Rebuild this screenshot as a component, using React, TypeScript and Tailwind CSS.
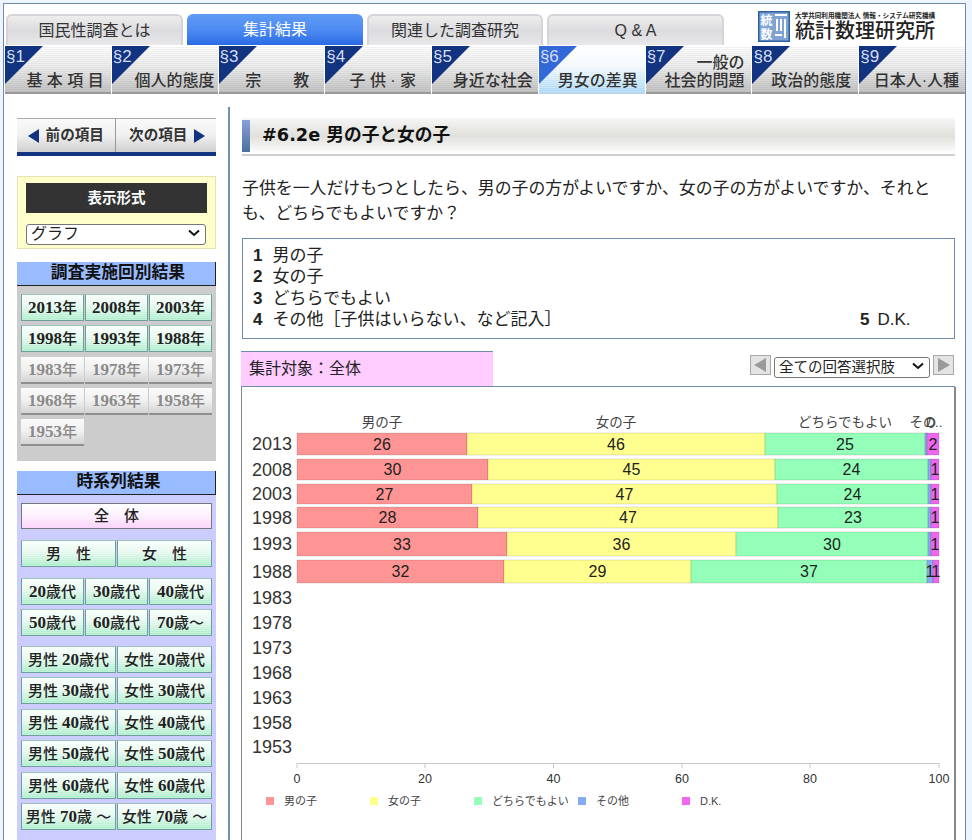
import React from "react";

const topTabs = [
  { label: "国民性調査とは", width: "w-[177px]", active: false },
  { label: "集計結果", width: "w-[176px]", active: true },
  { label: "関連した調査研究", width: "w-[176px]", active: false },
  { label: "Q & A", width: "w-[177px]", active: false },
];

const sections = [
  { no: "§1", lines: ["基 本 項 目"], pr: "pr-[7px]" },
  { no: "§2", lines: ["個人的態度"], pr: "pr-[3px]" },
  { no: "§3", lines: ["宗　　教"], pr: "pr-[15px]" },
  { no: "§4", lines: ["子 供 · 家"], pr: "pr-[15px]" },
  { no: "§5", lines: ["身近な社会"], pr: "pr-[5px]" },
  { no: "§6", lines: ["男女の差異"], pr: "pr-[7px]" },
  { no: "§7", lines: ["一般の", "社会的問題"], pr: "pr-[7px]" },
  { no: "§8", lines: ["政治的態度"], pr: "pr-[7px]" },
  { no: "§9", lines: ["日本人·人種"], pr: "pr-[6px]" },
];

const yearsOn = ["2013", "2008", "2003", "1998", "1993", "1988"];
const yearsOff = ["1983", "1978", "1973", "1968", "1963", "1958", "1953"];

const green =
  "bg-[image:repeating-linear-gradient(0deg,rgba(255,255,255,0.3)_0px,rgba(255,255,255,0.3)_1px,transparent_1px,transparent_2px),linear-gradient(#f8fffb,#e4f8ee_45%,#a6ecc8)] border border-[#6f9f9a] border-t-[#9cc4bc] text-[#222]";
const grey =
  "bg-linear-to-b from-[#fbfbfb] via-[#f0f0f0] to-[#d4d4d4] border-b-2 border-b-[#8f8f8f] text-[#8a8a8a]";

// digits of the button labels are set in a bold serif
function BtnLabel({ text }: { text: string }) {
  return (
    <span>
      {text.split(/(\d+)/).map((part, i) =>
        /\d/.test(part) ? (
          <span key={i} className="font-['Liberation_Serif','Noto_Sans_CJK_JP',serif] font-bold text-[17px]">
            {part}
          </span>
        ) : (
          <span key={i}>{part}</span>
        )
      )}
    </span>
  );
}

function SideBtn({ text, off }: { text: string; off?: boolean }) {
  return (
    <div className={`h-[27px] flex items-center justify-center font-medium text-[15px] leading-none whitespace-nowrap ${off ? grey : green}`}>
      <BtnLabel text={text} />
    </div>
  );
}

function Logo() {
  return (
    <svg width="32" height="31" viewBox="0 0 32 31" className="shrink-0">
      <rect width="32" height="31" fill="#2f5f9f" />
      <rect x="1.5" y="1.5" width="29" height="28" fill="#7fa4d4" />
      <text x="2.5" y="14" fontSize="12" fontWeight="700" fill="#fff" fontFamily="Noto Sans CJK JP">統</text>
      <text x="2.5" y="27.5" fontSize="12" fontWeight="700" fill="#fff" fontFamily="Noto Sans CJK JP">数</text>
      <rect x="17" y="3" width="12" height="2" fill="#fff" />
      <rect x="18" y="8" width="2" height="12" fill="#fff" />
      <rect x="22" y="8" width="2" height="12" fill="#fff" />
      <rect x="26" y="8" width="2" height="19" fill="#fff" />
      <rect x="17" y="23" width="7" height="2" fill="#fff" />
    </svg>
  );
}

function Select({ label, width, text }: { label: string; width: string; text: string }) {
  return (
    <div className={`relative h-[21px] ${width}`}>
      <select className={`appearance-none w-full h-full bg-white border border-[#767676] rounded-[3px] leading-none pl-[4px] ${text}`}>
        <option>{label}</option>
      </select>
      <svg width="12" height="8" viewBox="0 0 12 8" className="absolute right-[6px] top-[7px] pointer-events-none">
        <path d="M1 1.5 L6 6 L11 1.5" fill="none" stroke="#111" strokeWidth="2" />
      </svg>
    </div>
  );
}

const barColors = ["#ff9494", "#ffff90", "#94ffb8", "#88aaf0", "#f066f0"];

const bars = [
  { y: 433, h: 22, edges: [467, 765, 925, 927, 939], vals: ["26", "46", "25", "", "2"] },
  { y: 459, h: 21, edges: [488, 775, 928, 931, 939], vals: ["30", "45", "24", "", "1"] },
  { y: 484, h: 20, edges: [472, 777, 928, 931, 939], vals: ["27", "47", "24", "", "1"] },
  { y: 507, h: 21, edges: [478, 778, 928, 931, 939], vals: ["28", "47", "23", "", "1"] },
  { y: 532, h: 24, edges: [507, 736, 928, 931, 939], vals: ["33", "36", "30", "", "1"] },
  { y: 560, h: 23, edges: [504, 691, 927, 933, 939], vals: ["32", "29", "37", "1", "1"] },
];

const catYears: [string, number][] = [
  ["2013", 444], ["2008", 470], ["2003", 494], ["1998", 518], ["1993", 544], ["1988", 572],
  ["1983", 598], ["1978", 623], ["1973", 648], ["1968", 673], ["1963", 698], ["1958", 723], ["1953", 747],
];

const legend = [
  { x: 266, label: "男の子" },
  { x: 370, label: "女の子" },
  { x: 474, label: "どちらでもよい" },
  { x: 578, label: "その他" },
  { x: 682, label: "D.K." },
];

function Chart() {
  return (
    <svg width="713" height="453" viewBox="242 387 713 453" className="block" fontFamily="Liberation Sans, Noto Sans CJK JP, sans-serif">
      <g fontSize="13.5" fill="#444" textAnchor="middle">
        <text x="382" y="427">男の子</text>
        <text x="616" y="427">女の子</text>
        <text x="845" y="427">どちらでもよい</text>
        <text x="923" y="427">その</text>
        <text x="934" y="427" fontSize="13">D..</text>
      </g>
      {catYears.map(([year, cy]) => (
        <text key={year} x="292" y={cy + 5.5} fontSize="18" fill="#333" textAnchor="end">{year}</text>
      ))}
      {bars.map((bar) => {
        let left = 297;
        return (
          <g key={bar.y}>
            {bar.edges.map((edge, i) => {
              const x = left;
              left = edge;
              return (
                <g key={i}>
                  <rect x={x} y={bar.y} width={edge - x} height={bar.h} fill={barColors[i]} stroke="#000" strokeOpacity="0.12" strokeWidth="1" />
                  {bar.vals[i] && (
                    <text x={(x + edge) / 2} y={bar.y + bar.h / 2 + 5.5} fontSize="16" fill="#222" textAnchor="middle">{bar.vals[i]}</text>
                  )}
                </g>
              );
            })}
          </g>
        );
      })}
      <line x1="297" y1="763.5" x2="939" y2="763.5" stroke="#c8c8c8" />
      {[297, 425, 553.5, 682, 810, 939].map((x, i) => (
        <g key={x}>
          <line x1={x} y1="763" x2={x} y2="768" stroke="#c8c8c8" />
          <text x={x} y="783" fontSize="12.5" fill="#333" textAnchor="middle">{i * 20}</text>
        </g>
      ))}
      {legend.map((item, i) => (
        <g key={item.label}>
          <rect x={item.x} y="797" width="8" height="8" fill={barColors[i]} />
          <text x={item.x + 18} y="805" fontSize="11" fill="#444">{item.label}</text>
        </g>
      ))}
    </svg>
  );
}

function ArrowBtn({ dir }: { dir: "left" | "right" }) {
  return (
    <svg width="21" height="20" viewBox="0 0 21 20">
      <rect x="0.5" y="0.5" width="20" height="19" fill="#e4e4e4" stroke="#a8a8a8" />
      <path d={dir === "left" ? "M4 10 L16 3 L16 17 Z" : "M17 10 L5 3 L5 17 Z"} fill="#9a9a9a" />
    </svg>
  );
}

export default function App() {
  return (
    <div className="h-[840px] w-[972px] overflow-hidden bg-[#eef4fd] pl-[3px] pt-[3px] font-['Liberation_Sans','Noto_Sans_CJK_JP',sans-serif] text-[#222]">
      <div className="w-[963px] h-[837px] bg-white border-l border-t border-r border-[#6f8cae]">
        {/* top tabs + logo */}
        <div className="flex items-end h-[41px] pl-[2px]">
          <div className="flex gap-[4px]">
            {topTabs.map((tab) => (
              <div
                key={tab.label}
                className={`${tab.width} h-[31px] rounded-t-[6px] flex items-center justify-center text-[16px] ${
                  tab.active
                    ? "bg-linear-to-b from-[#5f9bf5] via-[#4f8cf2] to-[#2a6be6] text-white"
                    : "bg-linear-to-b from-[#eeeeee] via-[#dcdce0] to-[#e8e8ea] border-[2px] border-b-0 border-[#d4d4da] text-[#333]"
                }`}
              >
                {tab.label}
              </div>
            ))}
          </div>
          <div className="flex items-center gap-[5px] ml-[34px] mb-[3px]">
            <Logo />
            <div className="w-[142px]">
              <div className="text-[6.6px] leading-[9px] font-bold text-[#222] whitespace-nowrap">大学共同利用機関法人 情報・システム研究機構</div>
              <div className="text-[20px] leading-[22px] font-medium text-[#222] whitespace-nowrap">統計数理研究所</div>
            </div>
          </div>
        </div>

        {/* numbered section tabs */}
        <div className="grid grid-cols-9 gap-px w-[960px] ml-px mt-px h-[48px]">
          {sections.map((sec) => {
            const active = sec.no === "§6";
            return (
              <div
                key={sec.no}
                className={`relative flex flex-col items-end justify-end pb-[2px] text-[16px] leading-[18px] font-medium border-b-2 whitespace-nowrap ${sec.pr} ${
                  active
                    ? "bg-[image:repeating-linear-gradient(0deg,rgba(255,255,255,0.3)_0px,rgba(255,255,255,0.3)_1px,transparent_1px,transparent_2px),linear-gradient(#ffffff,#f2f8fd_45%,#a6d6f4)] border-[#b8d8ee] text-[#333]"
                    : "bg-[image:repeating-linear-gradient(0deg,rgba(0,0,0,0.05)_0px,rgba(0,0,0,0.05)_1px,transparent_1px,transparent_2px),linear-gradient(#ffffff,#ededed_45%,#c4c4c4)] border-[#999] text-[#333]"
                }`}
              >
                <svg width="38" height="38" viewBox="0 0 38 38" className="absolute left-0 top-0">
                  <path d="M0 0 H38 L0 38 Z" fill={active ? "#3268d8" : "#12337f"} />
                </svg>
                <span className="absolute left-[1px] top-[1px] text-[17px] leading-[19px] font-normal text-[#d4def2]">{sec.no}</span>
                {sec.lines.map((line) => (
                  <div key={line} className="relative">{line}</div>
                ))}
              </div>
            );
          })}
        </div>

        <div className="flex pt-[13px]">
          {/* left column */}
          <div className="w-[199px] ml-[13px] mr-[12px] pt-[11px] shrink-0">
            <div className="flex h-[38px] border-b-4 border-[#12337f]">
              <div className="flex-1 flex items-center justify-center gap-[7px] text-[14.6px] font-bold text-[#333] bg-linear-to-b from-[#fafafa] via-[#f0f0f0] to-[#cfcfcf] border-t border-[#aaa] border-r border-r-[#999]">
                <svg width="11" height="14" viewBox="0 0 11 14"><path d="M0 7 L11 0 V14 Z" fill="#12337f" /></svg>
                前の項目
              </div>
              <div className="flex-1 flex items-center justify-center gap-[7px] pl-[3px] text-[14.6px] font-bold text-[#333] bg-linear-to-b from-[#fafafa] via-[#f0f0f0] to-[#cfcfcf] border-t border-[#aaa]">
                次の項目
                <svg width="11" height="14" viewBox="0 0 11 14"><path d="M11 7 L0 0 V14 Z" fill="#12337f" /></svg>
              </div>
            </div>

            <div className="mt-[20px] h-[73px] bg-[#ffffcc] border border-[#e6e2b4] px-[8px] pt-[6px]">
              <div className="h-[30px] mb-[9px] pt-[1px] bg-[#333] text-white text-[14.5px] font-bold flex items-center justify-center">表示形式</div>
              <Select label="グラフ" width="w-[180px]" text="text-[16px]" />
            </div>

            <div className="mt-[13px] h-[24px] pb-[1px] pl-[4px] bg-[#99bbff] border-r border-b border-[#222] flex items-center justify-center text-[16.8px] font-bold text-[#111]">調査実施回別結果</div>
            <div className="bg-[#cccccc] h-[175px] px-[4px] pt-[8px]">
              <div className="grid grid-cols-3 gap-x-[1px] gap-y-[4.25px]">
                {yearsOn.map((y) => <SideBtn key={y} text={`${y}年`} />)}
                {yearsOff.map((y) => <SideBtn key={y} text={`${y}年`} off />)}
              </div>
            </div>

            <div className="mt-[10px] h-[24px] pb-[1px] pl-[5px] bg-[#99bbff] border-r border-b border-[#222] flex items-center justify-center text-[16.8px] font-bold text-[#111]">時系列結果</div>
            <div className="bg-[#ccccff] px-[4px] pt-[8px] h-[360px]">
              <div className="h-[26px] flex items-center justify-center text-[15px] font-medium bg-linear-to-b from-[#ffffff] via-[#fdf0fd] to-[#fbd4fb] border border-[#777]">全　体</div>
              <div className="grid grid-cols-2 gap-x-[1px] mt-[11px]">
                <SideBtn text="男　性" />
                <SideBtn text="女　性" />
              </div>
              <div className="grid grid-cols-3 gap-x-[1px] gap-y-[4px] mt-[11px]">
                {["20歳代", "30歳代", "40歳代", "50歳代", "60歳代", "70歳～"].map((t) => <SideBtn key={t} text={t} />)}
              </div>
              <div className="grid grid-cols-2 gap-x-[1px] gap-y-[4.4px] mt-[10px]">
                {["20歳代", "30歳代", "40歳代", "50歳代", "60歳代", "70歳 ～"].flatMap((t) => [
                  <SideBtn key={`m${t}`} text={`男性 ${t}`} />,
                  <SideBtn key={`f${t}`} text={`女性 ${t}`} />,
                ])}
              </div>
            </div>
          </div>

          {/* main column */}
          <div className="border-l-2 border-[#6f93ad] pl-[12px] pt-[11px] w-[727px]">
            <div className="flex h-[38px] w-[713px] border-b-2 border-[#cfcfcf] bg-linear-to-b from-[#f6f6f6] via-[#e0e0dc] to-[#ffffff]">
              <div className="w-[8px] h-[32px] mt-[2px] bg-linear-to-b from-[#8a9fdc] to-[#4a7199]" />
              <div className="ml-[12px] pb-[1px] flex items-center text-[17.7px] font-bold text-[#111] font-['DejaVu_Sans','Noto_Sans_CJK_JP',sans-serif]">#6.2e 男の子と女の子</div>
            </div>

            <p className="mt-[20px] w-[713px] text-[16.9px] leading-[25px] text-[#222]">
              子供を一人だけもつとしたら、男の子の方がよいですか、女の子の方がよいですか、それとも、どちらでもよいですか？
            </p>

            <div className="mt-[12px] w-[713px] h-[101px] border border-[#6f8cae] px-[10px] pt-[6px] text-[17px] leading-[21.4px]">
              <div><b className="mr-[10px]">1</b>男の子</div>
              <div><b className="mr-[10px]">2</b>女の子</div>
              <div><b className="mr-[10px]">3</b>どちらでもよい</div>
              <div className="flex">
                <div className="w-[607px] shrink-0"><b className="mr-[10px]">4</b>その他［子供はいらない、など記入］</div>
                <div><b className="mr-[8px]">5</b>D.K.</div>
              </div>
            </div>

            <div className="mt-[12px] -ml-px w-[714px] h-[36px] flex border-b border-[#6f8cae]">
              <div className="w-[252px] h-[35px] pb-[1px] bg-[#ffccff] border-t border-[#6f8cae] pl-[8px] flex items-center text-[16px]">集計対象：全体</div>
              <div className="ml-auto mr-[1px] mt-[4px] flex items-start gap-[3px]">
                <ArrowBtn dir="left" />
                <Select label="全ての回答選択肢" width="w-[156px]" text="text-[14.5px]" />
                <ArrowBtn dir="right" />
              </div>
            </div>

            <div className="-ml-px w-[715px] h-[460px] border-l border-r-2 border-[#888] overflow-hidden">
              <Chart />
            </div>
          </div>
        </div>
      </div>
    </div>
  );
}
